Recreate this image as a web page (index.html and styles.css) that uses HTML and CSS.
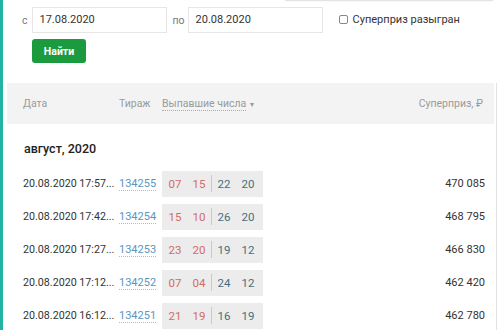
FILE: index.html
```html
<!DOCTYPE html>
<html lang="ru">
<head>
<meta charset="utf-8">
<link rel="stylesheet" href="styles.css">
</head>
<body>
<div class="page">
  <div class="top-edge"></div>
  <div class="filters">
    <div class="filter-row">
      <span class="lbl lbl-from">с</span>
      <div class="field">17.08.2020</div>
      <span class="lbl lbl-to">по</span>
      <div class="field">20.08.2020</div>
      <label class="check"><span class="box"></span>Суперприз разыгран</label>
    </div>
    <button class="btn">Найти</button>
  </div>
  <div class="table">
    <div class="thead">
      <span class="c-date">Дата</span>
      <span class="c-draw">Тираж</span>
      <span class="c-nums"><span class="sort">Выпавшие числа</span> <span class="arrow">▾</span></span>
      <span class="c-prize">Суперприз, ₽</span>
    </div>
    <div class="month">август, 2020</div>
    <div class="row">
      <span class="c-date dt">20.08.2020 17:57...</span>
      <span class="c-draw"><a class="link">134255</a></span>
      <span class="c-nums"><span class="balls"><i class="r">07</i><i class="r">15</i><b class="sep"></b><i class="b">22</i><i class="b">20</i></span></span>
      <span class="c-prize">470 085</span>
    </div>
    <div class="row">
      <span class="c-date dt">20.08.2020 17:42...</span>
      <span class="c-draw"><a class="link">134254</a></span>
      <span class="c-nums"><span class="balls"><i class="r">15</i><i class="r">10</i><b class="sep"></b><i class="b">26</i><i class="b">20</i></span></span>
      <span class="c-prize">468 795</span>
    </div>
    <div class="row">
      <span class="c-date dt">20.08.2020 17:27...</span>
      <span class="c-draw"><a class="link">134253</a></span>
      <span class="c-nums"><span class="balls"><i class="r">23</i><i class="r">20</i><b class="sep"></b><i class="b">19</i><i class="b">12</i></span></span>
      <span class="c-prize">466 830</span>
    </div>
    <div class="row">
      <span class="c-date dt">20.08.2020 17:12...</span>
      <span class="c-draw"><a class="link">134252</a></span>
      <span class="c-nums"><span class="balls"><i class="r">07</i><i class="r">04</i><b class="sep"></b><i class="b">24</i><i class="b">12</i></span></span>
      <span class="c-prize">462 420</span>
    </div>
    <div class="row">
      <span class="c-date dt">20.08.2020 16:12...</span>
      <span class="c-draw"><a class="link">134251</a></span>
      <span class="c-nums"><span class="balls"><i class="r">21</i><i class="r">19</i><b class="sep"></b><i class="b">16</i><i class="b">19</i></span></span>
      <span class="c-prize">462 780</span>
    </div>
  </div>
</div>
</body>
</html>
```
FILE: styles.css
```css
* { box-sizing: border-box; }
html, body { margin: 0; padding: 0; background: #fff; }
body {
  font-family: Roboto, "Noto Sans", Arial, sans-serif;
  color: #333;
  font-size: 11px;
  overflow: hidden;
}
.page {
  border-left: 3px solid #22b4a3;
  height: 330px;
  display: flex;
  flex-direction: column;
}
.top-edge {
  height: 2px;
  margin-left: 282px;
  width: 208px;
  border-bottom: 1px solid #e4e4e4;
  box-shadow: 0 1px 2px rgba(0,0,0,0.05);
}
.filters {
  padding: 6px 0 0 19px;
  display: flex;
  flex-direction: column;
  align-items: flex-start;
}
.filter-row {
  display: flex;
  align-items: center;
}
.lbl { color: #777; font-size: 10.5px; }
.lbl-from { margin-right: 4px; }
.lbl-to { margin: 0 3px 0 6px; }
.field {
  width: 135px;
  height: 26px;
  border: 1px solid #e6e6e6;
  padding-left: 7px;
  line-height: 24px;
  font-size: 11px;
  color: #333;
}
.check {
  display: flex;
  align-items: center;
  margin-left: 16px;
  font-size: 11px;
  color: #333;
  margin-top: -2px;
}
.box {
  width: 9px;
  height: 9px;
  border: 1px solid #888;
  border-radius: 2px;
  margin-right: 5px;
}
.btn {
  margin: 6px 0 0 10px;
  height: 24px;
  width: 54px;
  border: 0;
  border-radius: 3px;
  background: #1c9b3e;
  color: #fff;
  font-family: Roboto, Arial, sans-serif;
  font-weight: 700;
  font-size: 10.5px;
  padding: 0;
}
.table {
  margin: 20px 1px 0 4px;
  border-right: 1px solid #e2e2e2;
  flex: 1;
}
.thead, .row {
  display: flex;
  align-items: center;
  padding: 0 11px 0 16px;
}
.thead {
  height: 41px;
  background: #f3f3f3;
  color: #9a9a9a;
  font-size: 10.5px;
  margin-right: 2px;
}
.c-date { width: 96px; flex: none; }
.dt { white-space: nowrap; font-size: 10.7px; }
.c-draw { width: 43px; flex: none; }
.c-nums { width: 120px; flex: none; }
.c-prize { flex: 1; text-align: right; }
.sort { border-bottom: 1px dotted #aaa; }
.arrow { font-size: 8px; margin-left: 1px; }
.month {
  height: 43px;
  padding: 17px 0 0 17px;
  line-height: 16px;
  font-size: 12.5px;
  font-weight: 500;
  color: #222;
}
.row {
  height: 33px;
}
.row .c-prize { color: #333; }
.link {
  color: #5b95c0;
  border-bottom: 1px dotted #9dc0da;
}
.balls {
  display: inline-flex;
  align-items: center;
  background: #ececec;
  height: 26px;
  padding: 0 3px 0 1px;
  width: 101px;
}
.balls i {
  font-style: normal;
  width: 24px;
  text-align: center;
  font-size: 11.5px;
}
.balls .r { color: #d36b67; }
.balls .b { color: #466e7e; }
.sep {
  width: 1px;
  height: 17px;
  background: #c9c9c9;
}
```
